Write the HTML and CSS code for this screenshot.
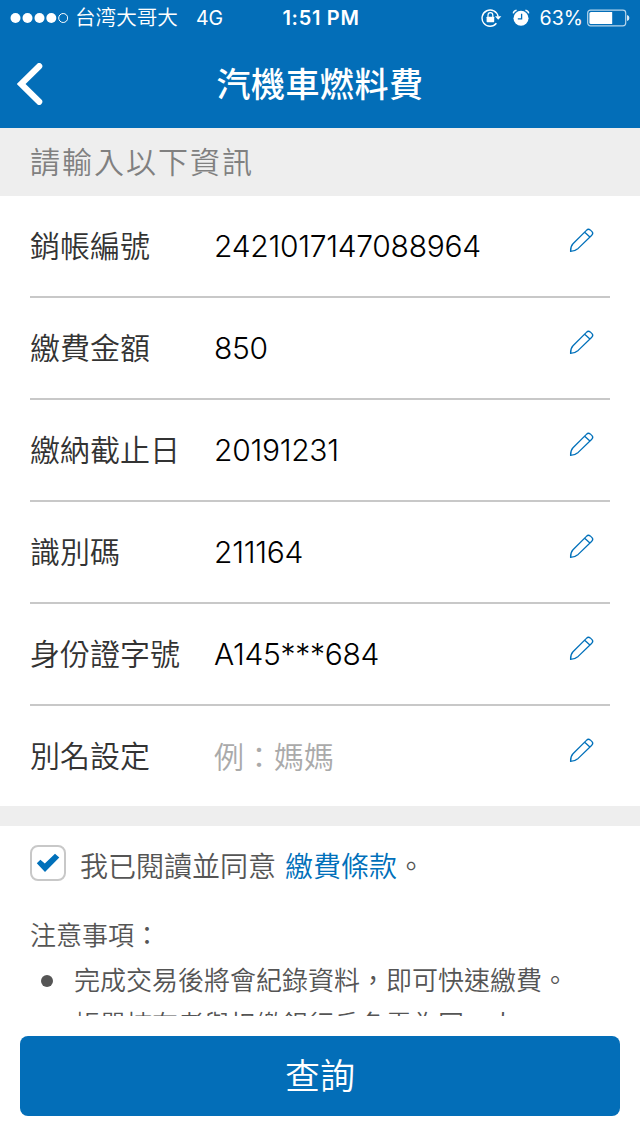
FILE: index.html
```html
<!DOCTYPE html>
<html lang="zh-Hant-TW">
<head>
<meta charset="utf-8">
<title>汽機車燃料費</title>
<link rel="stylesheet" href="styles.css">
</head>
<body>
<svg class="defs" width="0" height="0" aria-hidden="true">
  <symbol id="pencil" viewBox="0 0 26 26">
    <path d="M1.6 24.4C1.5 21 2.4 18.4 4 16.8L17.4 3.4Q19.3 1.4 21.2 2.9L23 4.6Q24.6 6.1 22.8 8.2L9.2 21.4C7 23.2 4.6 24.2 1.6 24.4ZM15.7 5.2L20.9 10" fill="none" stroke="currentColor" stroke-width="1.3" stroke-linejoin="round"/>
  </symbol>
</svg>
<div class="screen">
  <header class="top">
    <div class="status">
      <div class="status-left">
        <svg class="signal" width="58" height="12" viewBox="0 0 58 12" fill="#fff"><circle cx="5.5" cy="6" r="5"/><circle cx="17.5" cy="6" r="5"/><circle cx="29.5" cy="6" r="5"/><circle cx="41.3" cy="6" r="5"/><circle cx="53.2" cy="6" r="4.5" fill="none" stroke="#fff"/></svg>
        <span class="carrier">台湾大哥大</span><span class="network">4G</span>
      </div>
      <div class="time">1:51 PM</div>
      <div class="status-right">
        <svg class="lock" width="22" height="20" viewBox="0 0 22 20"><path d="M15.4 15.3A8.1 8.1 0 1 1 17.1 8.5" fill="none" stroke="#fff" stroke-width="1.4"/><path d="M14 8.3H20.4L17.2 11.8Z" fill="#fff"/><rect x="5.6" y="8.7" width="7.6" height="5.5" rx=".6" fill="#fff"/><path d="M7 9V7a2.4 2.4 0 0 1 4.8 0V9" fill="none" stroke="#fff" stroke-width="1.2"/></svg>
        <svg class="alarm" width="18" height="18" viewBox="0 0 18 18"><circle cx="9" cy="9.2" r="7.5" fill="#fff"/><path d="M1.3 4.3Q1.7 1.9 4.6 1.3M16.7 4.3Q16.3 1.9 13.4 1.3" fill="none" stroke="#fff" stroke-width="1.4"/><path d="M9.6 4.8V9.9H5.8" fill="none" stroke="#036eb8" stroke-width="1.3"/></svg>
        <span class="percent">63%</span>
        <svg class="battery" width="43" height="18" viewBox="0 0 43 18"><rect x=".7" y="1.2" width="38" height="15.6" rx="2.8" fill="none" stroke="#b5d5eb" stroke-width="1.2"/><path d="M4 3H25.2V15H4Q2.4 15 2.4 13.4V4.6Q2.4 3 4 3Z" fill="#fff"/><path d="M40 6Q42.4 6.5 42.4 9T40 12Z" fill="#d8e9f5"/></svg>
      </div>
    </div>
    <nav class="nav">
      <svg class="back" width="26" height="42" viewBox="0 0 26 42"><path d="M22.2 3.2L4.1 21L22.2 38.8" fill="none" stroke="#fff" stroke-width="6.2" stroke-linecap="round"/></svg>
      <h1 class="title">汽機車燃料費</h1>
    </nav>
  </header>
  <h2 class="section">請輸入以下資訊</h2>
  <main class="form">
    <div class="row"><span class="label">銷帳編號</span><span class="value">2421017147088964</span><svg class="edit"><use href="#pencil"/></svg></div>
    <div class="row"><span class="label">繳費金額</span><span class="value">850</span><svg class="edit"><use href="#pencil"/></svg></div>
    <div class="row"><span class="label">繳納截止日</span><span class="value">20191231</span><svg class="edit"><use href="#pencil"/></svg></div>
    <div class="row"><span class="label">識別碼</span><span class="value">211164</span><svg class="edit"><use href="#pencil"/></svg></div>
    <div class="row"><span class="label">身份證字號</span><span class="value">A145***684</span><svg class="edit"><use href="#pencil"/></svg></div>
    <div class="row"><span class="label">別名設定</span><span class="value placeholder">例：媽媽</span><svg class="edit"><use href="#pencil"/></svg></div>
  </main>
  <div class="divider"></div>
  <section class="terms">
    <div class="agree">
      <span class="checkbox"><svg width="24" height="20" viewBox="0 0 24 20"><path d="M.8 10.2L4.4 6.8L8.8 10.6L19 .8L23.3 4.6L9 19Z" fill="#0070ba"/></svg></span>
      <span class="agree-text">我已閱讀並同意 <a class="link">繳費條款</a>。</span>
    </div>
    <p class="notes-title">注意事項：</p>
    <ul class="notes">
      <li class="note">完成交易後將會紀錄資料，即可快速繳費。</li>
      <li class="note plain">帳單持有者與扣繳銀行戶名需為同一人</li>
    </ul>
  </section>
  <footer class="footer"><button class="submit">查詢</button></footer>
</div>
</body>
</html>
```

FILE: styles.css
```css
* { box-sizing: border-box; }
body { margin: 0; font-family: Inter, "Noto Sans CJK TC", sans-serif; font-weight: 350; background: #fff; }
.defs { display: block; }
.screen { width: 640px; height: 1136px; display: flex; flex-direction: column; overflow: hidden; }
.top { height: 128px; flex: none; background: #036eb8; color: #fff; }
.status { height: 40px; display: grid; grid-template-columns: 1fr auto 1fr; align-items: center; padding: 0 10px 4px; font-size: 20px; line-height: 36px; }
.status-left, .status-right { display: flex; align-items: center; }
.status-right { justify-content: flex-end; }
.carrier { margin-left: 7px; font-size: 20.6px; }
.network { margin-left: 18px; font-weight: 400; font-size: 19.5px; }
.time { font-weight: 600; letter-spacing: .7px; margin-left: 2px; }
.alarm { margin-left: 9px; }
.percent { margin: 0 4px 0 10px; font-weight: 400; font-size: 19.6px; }
.nav { height: 88px; display: grid; grid-template-columns: 60px 1fr 60px; align-items: center; }
.back { margin-left: 17px; }
.title { margin: 0; padding-top: 2px; text-align: center; font-size: 34px; line-height: 50px; font-weight: 500; letter-spacing: .5px; }
.section { margin: 0; flex: none; height: 68px; padding-left: 30px; background: #eee; color: #808080; font-size: 30px; line-height: 68px; font-weight: 350; letter-spacing: 2px; }
.form { flex: none; padding: 0 30px; }
.row { height: 102px; display: grid; grid-template-columns: 184px 1fr 26px; padding-right: 15px; border-bottom: 2px solid #c8c8c8; font-size: 30px; line-height: 100px; white-space: nowrap; }
.row:last-child { height: 100px; border: 0; }
.label { color: #333; }
.value { color: #000; font-size: 30px; font-weight: 320; letter-spacing: -.28px; }
.placeholder { color: #aaa; font-weight: 350; letter-spacing: 0; line-height: 102px; }
.edit { width: 26px; height: 26px; margin-top: 31px; color: #0070ba; }
.divider { flex: none; height: 20px; background: #eee; }
.terms { height: 190px; flex: none; overflow: hidden; padding: 19px 30px 0; color: #555; }
.agree { display: flex; height: 42px; align-items: flex-start; }
.checkbox { flex: none; width: 36px; height: 36px; display: grid; place-items: center; border: 2px solid #c8c8c8; border-radius: 8px; }
.agree-text { margin-left: 14px; font-size: 28px; line-height: 44px; white-space: nowrap; }
.link { color: #0070ba; margin-left: 1px; }
.notes-title { margin: 26px 0 0; font-size: 26px; line-height: 46px; }
.notes { margin: 0; padding: 0; list-style: none; font-size: 26px; line-height: 40px; }
.note { display: flex; align-items: center; padding-left: 11px; white-space: nowrap; margin-top: 2px; }
.note::before { content: ""; width: 12px; height: 12px; margin-right: 21px; border-radius: 50%; background: #555; }
.plain { margin-top: 4px; }
.plain::before { visibility: hidden; }
.footer { flex: none; padding: 20px; }
.submit { display: block; width: 600px; height: 80px; border: 0; border-radius: 8px; background: #036eb8; color: #fff; font: 350 35px/80px Inter, "Noto Sans CJK TC", sans-serif; padding: 0; }
```
